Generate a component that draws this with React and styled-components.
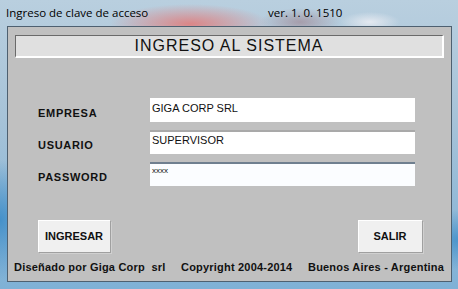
import React from 'react'
import styled, { createGlobalStyle } from 'styled-components'

const GlobalStyle = createGlobalStyle`
  html, body {
    margin: 0;
    padding: 0;
    background: #8fb4cf;
  }
`

const Window = styled.div`
  width: 458px;
  height: 289px;
  box-sizing: border-box;
  display: flex;
  flex-direction: column;
  overflow: hidden;
  background:
    radial-gradient(ellipse 80px 20px at 190px 24px, rgba(222, 130, 130, 0.95), rgba(222, 130, 130, 0) 100%),
    radial-gradient(ellipse 40px 14px at 300px 22px, rgba(150, 110, 120, 0.5), rgba(150, 110, 120, 0) 100%),
    radial-gradient(ellipse 30px 10px at 370px 22px, rgba(240, 240, 245, 0.8), rgba(240, 240, 245, 0) 100%),
    radial-gradient(ellipse 40px 60px at 0px 220px, rgba(60, 140, 200, 0.9), rgba(60, 140, 200, 0) 100%),
    radial-gradient(ellipse 60px 30px at 460px 240px, rgba(60, 140, 200, 0.8), rgba(60, 140, 200, 0) 100%),
    linear-gradient(180deg, #b9cfdf 0%, #a7c3d8 40%, #7fb1d6 100%);
`

const TitleBar = styled.div`
  height: 26px;
  flex: none;
  display: flex;
  align-items: center;
  padding: 0 0 2px 6px;
  box-sizing: border-box;
  font-family: "Open Sans", "Liberation Sans", sans-serif;
  font-size: 11.5px;
  color: #000;
`

const Caption = styled.span`
  width: 262px;
`

const Panel = styled.div`
  flex: 1;
  margin: 0 6px 7px 7px;
  border: 1px solid #4e6070;
  background: #c0c0c0;
  display: flex;
  flex-direction: column;
  padding: 8px 7px 0 7px;
  font-family: "Liberation Sans", Arial, sans-serif;
`

const Header = styled.div`
  height: 23px;
  box-sizing: border-box;
  background: #e0e0e0;
  border-top: 1px solid #6a6a6a;
  border-left: 1px solid #6a6a6a;
  border-right: 2px solid #ffffff;
  border-bottom: 2px solid #ffffff;
  display: flex;
  align-items: center;
  justify-content: center;
  font-size: 16px;
  letter-spacing: 1px;
  color: #111;
`

const Form = styled.div`
  display: grid;
  grid-template-columns: 112px 265px;
  grid-auto-rows: 24px;
  row-gap: 8px;
  margin: 40px 0 0 23px;
  align-items: center;
`

const Label = styled.span`
  font-size: 11px;
  font-weight: bold;
  letter-spacing: 0.7px;
  color: #111;
  padding-top: 6px;
`

const Field = styled.div`
  height: 24px;
  box-sizing: border-box;
  background: ${p => (p.$focused ? '#fbfdff' : '#ffffff')};
  border-top: 2px solid ${p => (p.$focused ? '#6f7f8f' : p.$plain ? '#ffffff' : '#a9a9a9')};
  padding: 2px 3px 0 2px;
  font-size: ${p => (p.$masked ? '8px' : '11px')};
  color: #111;
  line-height: ${p => (p.$masked ? '10px' : '13px')};
`

const Actions = styled.div`
  display: flex;
  justify-content: space-between;
  margin: 34px 22px 0 23px;
`

const Button = styled.button`
  width: ${p => p.$w}px;
  height: 32px;
  background: #f0f0f0;
  border: none;
  box-shadow: inset 1px 1px 0 #ffffff, 1px 1px 0 #a0a0a0, 2px 2px 0 #d0d0d0;
  font-family: "Liberation Sans", Arial, sans-serif;
  font-size: 11px;
  font-weight: bold;
  color: #111;
  padding: 0;
`

const Footer = styled.div`
  display: flex;
  justify-content: space-between;
  margin: 9px 0 0 -1px;
  font-size: 11px;
  font-weight: bold;
  letter-spacing: 0.2px;
  color: #111;
  white-space: pre;
`

export default function App() {
  return (
    <>
      <GlobalStyle />
      <Window>
        <TitleBar>
          <Caption>Ingreso de clave de acceso</Caption>
          <span>ver. 1. 0. 1510</span>
        </TitleBar>
        <Panel>
          <Header>INGRESO AL SISTEMA</Header>
          <Form>
            <Label>EMPRESA</Label>
            <Field $plain>GIGA CORP SRL</Field>
            <Label>USUARIO</Label>
            <Field>SUPERVISOR</Field>
            <Label>PASSWORD</Label>
            <Field $focused $masked>xxxx</Field>
          </Form>
          <Actions>
            <Button $w={72}>INGRESAR</Button>
            <Button $w={64}>SALIR</Button>
          </Actions>
          <Footer>
            <span>Diseñado por Giga Corp  srl</span>
            <span>Copyright 2004-2014</span>
            <span>Buenos Aires - Argentina</span>
          </Footer>
        </Panel>
      </Window>
    </>
  )
}
